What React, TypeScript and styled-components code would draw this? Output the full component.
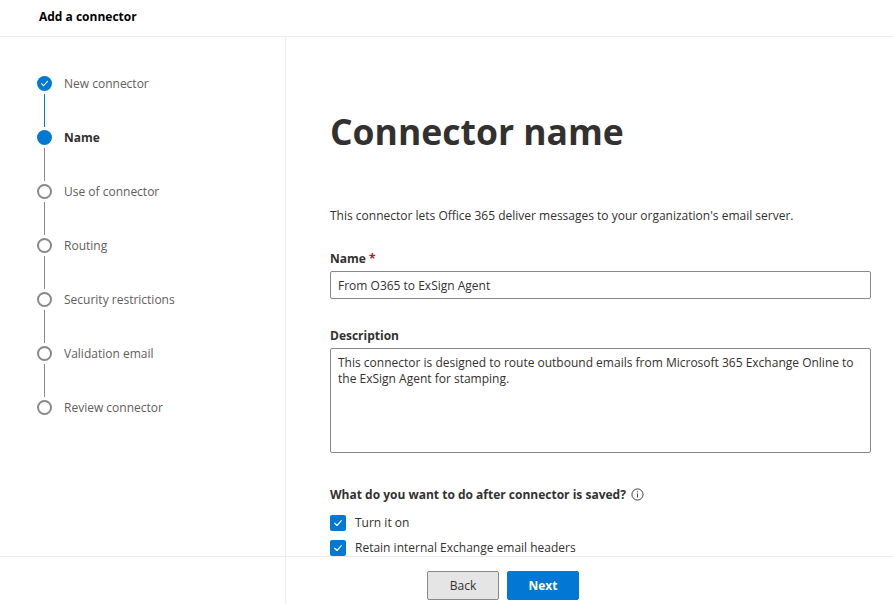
import React from "react";
import styled, { createGlobalStyle } from "styled-components";

const Global = createGlobalStyle`
  html, body { margin: 0; padding: 0; background: #fff; }
  body { font-family: "Open Sans", "Liberation Sans", sans-serif; color: #323130; }
  * { box-sizing: border-box; }
`;

const Page = styled.div`
  height: 604px;
  display: flex;
  flex-direction: column;
  overflow: hidden;
`;

const Header = styled.header`
  height: 37px;
  flex: none;
  border-bottom: 1px solid #edebe9;
  padding: 8px 0 0 39px;
  font-size: 12px;
  font-weight: 700;
  color: #000;
`;

const Body = styled.div`
  flex: 1;
  min-height: 0;
  display: grid;
  grid-template-columns: 286px 1fr;
  grid-template-rows: 1fr 48px;
`;

const Nav = styled.nav`
  border-right: 1px solid #edebe9;
  padding: 39px 0 0 37px;
  display: flex;
  flex-direction: column;
`;

const Step = styled.div`
  display: flex;
  align-items: flex-start;
  gap: 12px;
  height: 54px;
`;

const Track = styled.div`
  width: 15px;
  display: flex;
  flex-direction: column;
  align-items: center;
  align-self: stretch;
`;

const Dot = styled.div<{ $state: "done" | "current" | "todo" }>`
  width: 15px;
  height: 15px;
  border-radius: 50%;
  flex: none;
  display: flex;
  align-items: center;
  justify-content: center;
  background: ${(p) => (p.$state === "todo" ? "#fff" : "#0078d4")};
  border: ${(p) => (p.$state === "todo" ? "2px solid #8a8886" : "none")};
`;

const Line = styled.div<{ $done: boolean }>`
  width: 1px;
  flex: 1;
  margin: 3px 0 3px;
  background: ${(p) => (p.$done ? "#0078d4" : "#8a8886")};
`;

const StepLabel = styled.span<{ $current: boolean }>`
  font-size: 12px;
  line-height: 15px;
  color: ${(p) => (p.$current ? "#323130" : "#605e5c")};
  font-weight: ${(p) => (p.$current ? 700 : 400)};
`;

const Main = styled.main`
  overflow: hidden;
  padding: 69px 22px 0 44px;
`;

const Title = styled.h1`
  margin: 0;
  font-size: 35.5px;
  line-height: 50px;
  font-weight: 700;
  color: #323130;
`;

const Intro = styled.p`
  margin: 51px 0 0;
  font-size: 12px;
  line-height: 17px;
`;

const Field = styled.div<{ $top: number }>`
  margin-top: ${(p) => p.$top}px;
  display: flex;
  flex-direction: column;
  gap: 4px;
`;

const Label = styled.label`
  font-size: 12px;
  line-height: 17px;
  font-weight: 700;
  color: #323130;
`;

const Req = styled.span`
  color: #a4262c;
  margin-left: 3px;
`;

const Input = styled.div`
  height: 28px;
  border: 1px solid #8a8886;
  border-radius: 2px;
  padding: 0 7px;
  display: flex;
  align-items: center;
  font-size: 12px;
`;

const TextArea = styled.div`
  height: 105px;
  border: 1px solid #8a8886;
  border-radius: 2px;
  padding: 6px 7px;
  font-size: 12px;
  line-height: 16px;
`;

const Question = styled.div`
  margin-top: 33px;
  font-size: 12px;
  line-height: 17px;
  font-weight: 700;
  display: flex;
  align-items: center;
  gap: 5px;
`;

const Checks = styled.div`
  margin-top: 12px;
  display: flex;
  flex-direction: column;
  gap: 9px;
`;

const CheckRow = styled.div`
  display: flex;
  align-items: center;
  gap: 9px;
  font-size: 12px;
  line-height: 16px;
`;

const Box = styled.div`
  width: 16px;
  height: 16px;
  border-radius: 2px;
  background: #0078d4;
  display: flex;
  align-items: center;
  justify-content: center;
  flex: none;
`;

const FooterLeft = styled.div`
  border-top: 1px solid #edebe9;
  border-right: 1px solid #edebe9;
`;

const Footer = styled.div`
  border-top: 1px solid #edebe9;
  display: flex;
  align-items: flex-start;
  padding: 14px 0 0 141px;
  gap: 8px;
`;

const Button = styled.button<{ $primary?: boolean }>`
  height: 29px;
  min-width: 72px;
  padding: 0 16px;
  border-radius: 2px;
  font-family: inherit;
  font-size: 12px;
  font-weight: ${(p) => (p.$primary ? 700 : 400)};
  background: ${(p) => (p.$primary ? "#0078d4" : "#e5e5e5")};
  color: ${(p) => (p.$primary ? "#fff" : "#323130")};
  border: 1px solid ${(p) => (p.$primary ? "#0078d4" : "#8a8886")};
`;

const Check = ({ size = 10 }: { size?: number }) => (
  <svg width={size} height={size} viewBox="0 0 12 12">
    <path d="M2 6.3 L4.8 9 L10 3.2" fill="none" stroke="#fff" strokeWidth="1.4" strokeLinecap="round" strokeLinejoin="round" />
  </svg>
);

const Info = () => (
  <svg width="13" height="13" viewBox="0 0 14 14">
    <circle cx="7" cy="7" r="6" fill="none" stroke="#323130" strokeWidth="1" />
    <line x1="7" y1="6" x2="7" y2="10.2" stroke="#323130" strokeWidth="1" />
    <circle cx="7" cy="4.1" r="0.7" fill="#323130" />
  </svg>
);

const steps = [
  "New connector",
  "Name",
  "Use of connector",
  "Routing",
  "Security restrictions",
  "Validation email",
  "Review connector",
];

export default function App() {
  const current = 1;
  return (
    <Page>
      <Global />
      <Header>Add a connector</Header>
      <Body>
        <Nav>
          {steps.map((s, i) => {
            const state = i < current ? "done" : i === current ? "current" : "todo";
            return (
              <Step key={s}>
                <Track>
                  <Dot $state={state}>{state === "done" && <Check size={9} />}</Dot>
                  {i < steps.length - 1 && <Line $done={i < current} />}
                </Track>
                <StepLabel $current={i === current}>{s}</StepLabel>
              </Step>
            );
          })}
        </Nav>
        <Main>
          <Title>Connector name</Title>
          <Intro>This connector lets Office 365 deliver messages to your organization's email server.</Intro>
          <Field $top={26}>
            <Label>
              Name<Req>*</Req>
            </Label>
            <Input>From O365 to ExSign Agent</Input>
          </Field>
          <Field $top={28}>
            <Label>Description</Label>
            <TextArea>
              This connector is designed to route outbound emails from Microsoft 365 Exchange Online to the ExSign Agent for stamping.
            </TextArea>
          </Field>
          <Question>
            What do you want to do after connector is saved? <Info />
          </Question>
          <Checks>
            <CheckRow>
              <Box><Check /></Box>Turn it on
            </CheckRow>
            <CheckRow>
              <Box><Check /></Box>Retain internal Exchange email headers
            </CheckRow>
            <CheckRow>
              <Box><Check /></Box>
            </CheckRow>
          </Checks>
        </Main>
        <FooterLeft />
        <Footer>
          <Button>Back</Button>
          <Button $primary>Next</Button>
        </Footer>
      </Body>
    </Page>
  );
}
